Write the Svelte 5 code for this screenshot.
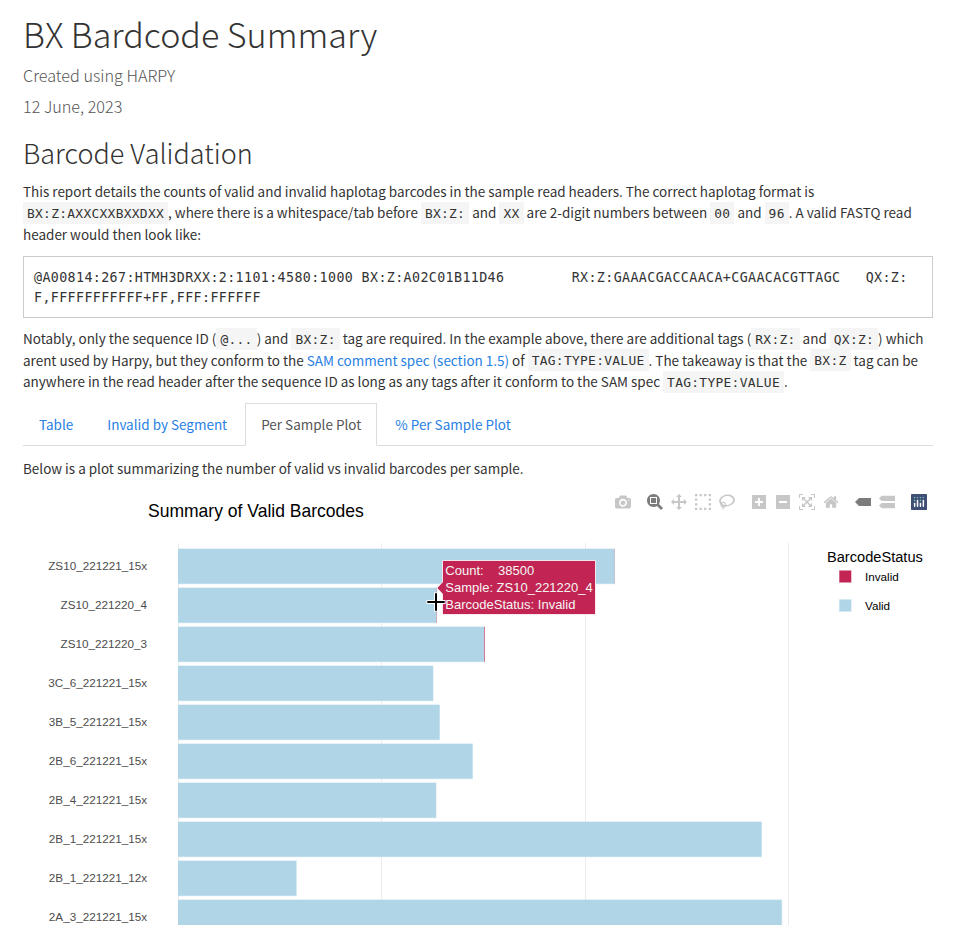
<script>
  const rows = [
    ['ZS10_221221_15x', 615, 0.3],
    ['ZS10_221220_4', 437, 0.45],
    ['ZS10_221220_3', 485, 0.9],
    ['3C_6_221221_15x', 433.5, 0],
    ['3B_5_221221_15x', 440, 0],
    ['2B_6_221221_15x', 473, 0],
    ['2B_4_221221_15x', 436.5, 0],
    ['2B_1_221221_15x', 762, 0],
    ['2B_1_221221_12x', 296.8, 0],
    ['2A_3_221221_15x', 782.2, 0]
  ];
  const grid = [178.5, 381.5, 585.5, 788.5];
  const tabs = ['Table', 'Invalid by Segment', 'Per Sample Plot', '% Per Sample Plot'];
  const icons = {
    camera: [1000, 'm500 450c-83 0-150-67-150-150 0-83 67-150 150-150 83 0 150 67 150 150 0 83-67 150-150 150z m400 150h-120c-16 0-34 13-39 29l-31 93c-6 15-23 28-40 28h-340c-16 0-34-13-39-28l-31-94c-6-15-23-28-40-28h-120c-55 0-100-45-100-100v-450c0-55 45-100 100-100h800c55 0 100 45 100 100v450c0 55-45 100-100 100z m-400-550c-138 0-250 112-250 250 0 138 112 250 250 250 138 0 250-112 250-250 0-138-112-250-250-250z m365 380c-19 0-35 16-35 35 0 19 16 35 35 35 19 0 35-16 35-35 0-19-16-35-35-35z'],
    zoom: [1000, 'm1000-25l-250 251c40 63 63 138 63 218 0 224-182 406-407 406-224 0-406-182-406-406s183-406 407-406c80 0 155 22 218 62l250-250 125 125z m-812 250l0 438 437 0 0-438-437 0z m62 375l313 0 0-312-313 0 0 312z', true],
    pan: [1000, 'm1000 350l-187 188 0-125-250 0 0 250 125 0-188 187-187-187 125 0 0-250-250 0 0 125-188-188 186-187 0 125 252 0 0-250-125 0 187-188 188 188-125 0 0 250 250 0 0-126 187 188z'],
    select: [1000, 'm0 850l0-143 143 0 0 143-143 0z m286 0l0-143 143 0 0 143-143 0z m285 0l0-143 143 0 0 143-143 0z m286 0l0-143 143 0 0 143-143 0z m-857-286l0-143 143 0 0 143-143 0z m857 0l0-143 143 0 0 143-143 0z m-857-285l0-143 143 0 0 143-143 0z m857 0l0-143 143 0 0 143-143 0z m-857-286l0-143 143 0 0 143-143 0z m286 0l0-143 143 0 0 143-143 0z m285 0l0-143 143 0 0 143-143 0z m286 0l0-143 143 0 0 143-143 0z'],
    lasso: [1031, 'm1018 538c-36 207-290 336-568 286-277-48-473-256-436-463 10-57 36-108 76-151-13-66 11-137 68-183 34-28 75-41 114-42l-55-70 0 0c-2-1-3-2-4-3-10-14-8-34 5-45 14-11 34-8 45 4 1 1 2 3 2 5l0 0 113 140c16 11 31 24 45 40 4 3 6 7 8 11 48-3 100 0 151 9 278 48 473 255 436 462z m-624-379c-80 14-149 48-197 96 42 42 109 47 156 9 33-26 47-66 41-105z m-187-74c-19 16-33 37-39 60 50-32 109-55 174-68-42-25-95-24-135 8z m360 75c-34-7-69-9-102-8 8 62-16 128-68 170-73 59-175 54-244-5-9 20-16 40-20 61-28 159 121 317 333 354s407-60 434-217c28-159-121-318-333-355z'],
    plus: [875, 'm1 787l0-875 875 0 0 875-875 0z m687-500l-187 0 0-187-125 0 0 187-188 0 0 125 188 0 0 187 125 0 0-187 187 0 0-125z'],
    minus: [875, 'm0 788l0-876 875 0 0 876-875 0z m688-500l-500 0 0 125 500 0 0-125z'],
    autoscale: [1000, 'm250 850l-187 0-63 0 0-62 0-188 63 0 0 188 187 0 0 62z m688 0l-188 0 0-62 188 0 0-188 62 0 0 188 0 62-62 0z m-875-938l0 188-63 0 0-188 0-62 63 0 187 0 0 62-187 0z m875 188l0-188-188 0 0-62 188 0 62 0 0 62 0 188-62 0z m-125 188l-1 0-93-94-156 156 156 156 92-93 2 0 0 250-250 0 0-2 93-92-156-156-156 156 94 92 0 2-250 0 0-250 0 0 93 93 157-156-157-156-93 94 0 0 0-250 250 0 0 0-94 93 156 157 156-157-93-93 0 0 250 0 0 250z'],
    home: [928.6, 'm786 296v-267q0-15-11-26t-25-10h-214v214h-143v-214h-214q-15 0-25 10t-11 26v267q0 1 0 2t0 2l321 264 321-264q1-1 1-4z m124 39l-34-41q-5-5-12-6h-2q-7 0-12 3l-386 322-386-322q-7-4-13-4-7 2-12 7l-35 41q-4 5-3 13t6 12l401 334q18 15 42 15t43-15l136-114v109q0 8 5 13t13 5h107q8 0 13-5t5-13v-227l122-102q5-5 6-12t-4-13z'],
    closest: [1500, 'm375 725l0 0-375-375 375-374 0-1 1125 0 0 750-1125 0z', true],
    compare: [1125, 'm187 786l0 2-187-188 188-187 0 0 937 0 0 373-938 0z m0-499l0 1-187-188 188-188 0 0 937 0 0 376-938-1z']
  };
  const groups = [['camera'], ['zoom', 'pan', 'select', 'lasso'], ['plus', 'minus', 'autoscale', 'home'], ['closest', 'compare']];
</script>

<main>
  <h1>BX Bardcode Summary</h1>
  <h4>Created using HARPY</h4>
  <h4>12 June, 2023</h4>
  <h2>Barcode Validation</h2>

  <p>
    This report details the counts of valid and invalid haplotag barcodes in the sample read headers. The correct haplotag format is<br />
    <code>BX:Z:AXXCXXBXXDXX</code>, where there is a whitespace/tab before <code>BX:Z:</code> and <code>XX</code> are 2-digit numbers between <code>00</code> and <code>96</code>. A valid FASTQ read<br />
    header would then look like:
  </p>

  <pre>{'@A00814:267:HTMH3DRXX:2:1101:4580:1000 BX:Z:A02C01B11D46        RX:Z:GAAACGACCAACA+CGAACACGTTAGC   QX:Z:\nF,FFFFFFFFFFF+FF,FFF:FFFFFF'}</pre>

  <p>
    Notably, only the sequence ID (<code>@...</code>) and <code>BX:Z:</code> tag are required. In the example above, there are additional tags (<code>RX:Z:</code> and <code>QX:Z:</code>) which<br />
    arent used by Harpy, but they conform to the <a href="#spec">SAM comment spec (section 1.5)</a> of <code>TAG:TYPE:VALUE</code>. The takeaway is that the <code>BX:Z</code> tag can be<br />
    anywhere in the read header after the sequence ID as long as any tags after it conform to the SAM spec <code>TAG:TYPE:VALUE</code>.
  </p>

  <nav>
    {#each tabs as tab, i}
      <span class="tab" class:active={i === 2}>{tab}</span>
    {/each}
  </nav>

  <p class="intro">Below is a plot summarizing the number of valid vs invalid barcodes per sample.</p>

  <section class="chart">
    <svg class="plot" width="962" height="438" viewBox="0 487 962 438">
      <text class="title" x="148" y="517">Summary of Valid Barcodes</text>
      {#each grid as x}
        <line x1={x} x2={x} y1="543" y2="925" stroke="#ebebeb" />
      {/each}
      {#each rows as [name, end, invalid], i}
        <text class="tick" x="147" y={570.2 + i * 39} text-anchor="end">{name}</text>
        <rect x="178" y={548.4 + i * 39} width={end - 178} height="35.8" fill="#d7eaf3" />
        <rect x="178" y={549 + i * 39} width={end - 178.6} height="34.6" fill="#b0d5e7" />
        {#if invalid}
          <rect x={end - 1} y={548.7 + i * 39} width="1" height="35.2" fill="#d4708c" opacity={invalid} />
        {/if}
      {/each}

      <text class="legend-title" x="827" y="562">BarcodeStatus</text>
      <rect x="839" y="570.2" width="12.6" height="12.6" fill="#e09aae" />
      <rect x="839.6" y="570.8" width="11.4" height="11.4" fill="#c22553" />
      <text class="legend" x="865" y="581">Invalid</text>
      <rect x="839" y="599.2" width="12.6" height="12.6" fill="#d7eaf3" />
      <rect x="839.6" y="599.8" width="11.4" height="11.4" fill="#b0d5e7" />
      <text class="legend" x="865" y="610">Valid</text>

      <path d="M437 588l5.5-6v-21.5h153v54h-153V594z" fill="#c22553" stroke="#fff" stroke-opacity=".8" />
      <g class="hover">
        <text x="445.3" y="575">Count:</text>
        <text x="498" y="575">38500</text>
        <text x="445.3" y="592">Sample: ZS10_221220_4</text>
        <text x="445.3" y="609">BarcodeStatus: Invalid</text>
      </g>
      <path d="M426.5 602h19M436 592.5v19" stroke="#fff" stroke-width="4" />
      <path d="M427.3 602h17.4M436 593.3v17.4" stroke="#000" stroke-width="2" />
    </svg>

    <div class="modebar">
      {#each groups as group}
        <div class="group">
          {#each group as key}
            <svg class:on={icons[key][2]} width="16" height="16" viewBox="0 0 {icons[key][0]} 1000">
              <path transform="matrix(1 0 0 -1 0 850)" d={icons[key][1]} />
            </svg>
          {/each}
        </div>
      {/each}
      <div class="group">
        <svg class="logo" width="16" height="16" viewBox="0 0 132 132">
          <rect width="132" height="132" rx="6" fill="#3f4f75" />
          <g fill="#80cfbe">
            <circle cx="78" cy="54" r="6" /><circle cx="102" cy="30" r="6" /><circle cx="78" cy="30" r="6" />
            <circle cx="54" cy="30" r="6" /><circle cx="30" cy="30" r="6" /><circle cx="30" cy="54" r="6" />
          </g>
          <g fill="#fff">
            <rect x="24" y="72" width="12" height="36" rx="6" /><rect x="72" y="72" width="12" height="36" rx="6" />
            <rect x="48" y="48" width="12" height="60" rx="6" /><rect x="96" y="48" width="12" height="60" rx="6" />
          </g>
        </svg>
      </div>
    </div>
  </section>
</main>

<style>
  :global(body) { margin: 0; background: #fff; overflow: hidden; }
  main {
    box-sizing: border-box;
    width: 962px;
    height: 925px;
    overflow: hidden;
    padding: 10px 29px 0 23px;
    color: #333;
    font: 400 13.49px/21.43px 'Noto Sans CJK SC', 'Open Sans', sans-serif;
    white-space: nowrap;
  }
  h1, h2, h4, p, pre { margin: 0; }
  h1, h2, h4 { font-weight: 300; }
  h1 { font-size: 34.1px; line-height: 46px; height: 55px; }
  h4 { font-size: 16.2px; line-height: 20px; height: 31px; color: #555; }
  h2 { font-size: 27px; line-height: 34px; height: 54px; padding-top: 9px; box-sizing: border-box; }
  p { height: 65px; }
  code, pre { font-family: 'DejaVu Sans Mono', monospace; }
  code { font-size: 12.9px; letter-spacing: 0.3px; background: #f5f5f5; padding: 3.5px 4px; line-height: 1; vertical-align: 0.8px; }
  pre {
    box-sizing: border-box;
    height: 62px;
    margin: 10px 0 10.3px;
    padding: 10.6px 10px 9px;
    border: 1px solid #ccc;
    font-size: 13.3px;
    line-height: 20px;
    letter-spacing: 0.395px;
  }
  a { color: #2780e3; text-decoration: none; }
  nav { display: flex; height: 43px; margin-top: 9.7px; box-sizing: border-box; border-bottom: 1px solid #ddd; }
  .tab { box-sizing: border-box; height: 43px; margin-right: 2px; padding: 10px 15px; border: 1px solid transparent; color: #2780e3; }
  .active { border-color: #ddd #ddd #fff; color: #555; background: #fff; }
  .intro { height: 29px; padding-top: 12px; }
  .chart { position: relative; width: 962px; margin-left: -23px; }
  .plot { display: block; font-family: 'Liberation Sans', Arial, sans-serif; }
  .title { font-size: 17.534px; fill: #000; }
  .tick { font-size: 11.69px; fill: #4d4d4d; }
  .legend-title { font-size: 14.612px; fill: #000; }
  .legend { font-size: 11.69px; fill: #000; }
  .hover { font-size: 13px; fill: #f5f5f5; }
  .modebar { position: absolute; top: 7px; right: 31px; display: flex; gap: 8px; }
  .group { display: flex; gap: 8px; padding: 0 4px; }
  .group svg { display: block; fill: rgba(68, 68, 68, 0.3); }
  .group svg.on { fill: rgba(68, 68, 68, 0.7); }
</style>
